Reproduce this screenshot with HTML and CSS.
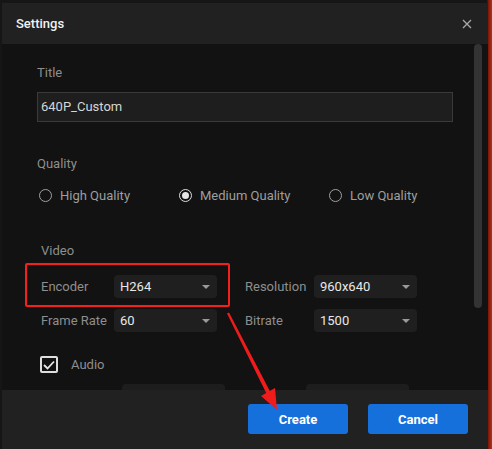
FILE: index.html
```html
<!DOCTYPE html>
<html>
<head>
<meta charset="utf-8">
<link rel="stylesheet" href="styles.css">
</head>
<body>
<div class="page">
  <div class="dialog">
    <div class="header">
      <span class="title">Settings</span>
      <svg class="close" width="10" height="10" viewBox="0 0 10 10"><path d="M1 1L9 9M9 1L1 9" stroke="#a8a8a8" stroke-width="1.3"/></svg>
    </div>
    <div class="content">
      <div class="label">Title</div>
      <div class="input">640P_Custom</div>

      <div class="label quality-label">Quality</div>
      <div class="radios">
        <div class="radio-item"><span class="radio"></span><span>High Quality</span></div>
        <div class="radio-item"><span class="radio checked"></span><span>Medium Quality</span></div>
        <div class="radio-item"><span class="radio"></span><span>Low Quality</span></div>
      </div>

      <div class="video">
        <div class="label video-label">Video</div>
        <div class="fields">
          <span class="flabel">Encoder</span>
          <div class="select">H264<span class="caret"></span></div>
          <span class="flabel">Resolution</span>
          <div class="select">960x640<span class="caret"></span></div>
          <span class="flabel">Frame Rate</span>
          <div class="select">60<span class="caret"></span></div>
          <span class="flabel">Bitrate</span>
          <div class="select">1500<span class="caret"></span></div>
        </div>
        <div class="audio">
          <span class="checkbox"><svg width="12" height="10" viewBox="0 0 12 10"><path d="M1 5L4.5 8.5L11 1.5" fill="none" stroke="#e8e8e8" stroke-width="1.8"/></svg></span>
          <span>Audio</span>
        </div>
        <div class="ghosts">
          <span class="ghost"></span>
          <span class="ghost"></span>
        </div>
      </div>

      <div class="scrollbar"></div>
      <div class="highlight"></div>
    </div>
    <div class="footer">
      <button class="btn">Create</button>
      <button class="btn">Cancel</button>
    </div>
  </div>
  <svg class="arrow" width="80" height="120" viewBox="0 0 80 120">
    <path d="M17 13.5 L19 12.5 L59.8 91.1 L65 88 L67 110 L51 96 L56.2 92.9 Z" fill="#f01c1c"/>
  </svg>
</div>
</body>
</html>
```

FILE: styles.css
```css
* { box-sizing: border-box; }
html, body {
  margin: 0;
  padding: 0;
  width: 492px;
  height: 449px;
  overflow: hidden;
}
body {
  background: linear-gradient(to right, #161616 0, #161616 487px, #7a1408 488px, #b0361a 492px);
  font-family: Roboto, "Noto Sans", sans-serif;
}
.page {
  position: relative;
  padding: 3px 4px 0 2px;
}
.dialog {
  width: 486px;
  height: 446px;
  display: flex;
  flex-direction: column;
  background: #121212;
}
.header {
  height: 41px;
  flex: none;
  background: #212121;
  display: flex;
  align-items: center;
  justify-content: space-between;
  padding: 0 16px 0 14px;
}
.title {
  color: #f2f2f2;
  font-size: 13px;
  font-weight: 500;
}
.content {
  flex: 1;
  position: relative;
  padding: 21px 0 0 35px;
  overflow: hidden;
}
.label {
  color: #8e8e8e;
  font-size: 13px;
  line-height: 16px;
}
.input {
  margin-top: 11px;
  width: 416px;
  height: 30px;
  background: #1e1e1e;
  border: 1px solid #3a3a3a;
  color: #d6d6d6;
  font-size: 13px;
  line-height: 28px;
  padding-left: 3px;
}
.quality-label { margin-top: 34px; }
.radios {
  display: flex;
  margin-top: 16px;
  height: 14px;
  align-items: center;
}
.radio-item {
  display: flex;
  align-items: center;
  gap: 8px;
  color: #9e9e9e;
  font-size: 13px;
}
.radio-item:nth-child(1) { width: 142px; padding-left: 2px; }
.radio-item:nth-child(2) { width: 150px; }
.radio {
  width: 13px;
  height: 13px;
  border-radius: 50%;
  border: 1.5px solid #a0a0a0;
  display: flex;
  align-items: center;
  justify-content: center;
}
.radio.checked { border-color: #dcdcdc; }
.radio.checked::after {
  content: "";
  width: 7px;
  height: 7px;
  border-radius: 50%;
  background: #e6e6e6;
}
.video { padding-left: 4px; }
.video-label { margin-top: 41px; }
.fields {
  margin-top: 16px;
  display: grid;
  grid-template-columns: 73px 103px 97px 103px;
  row-gap: 11px;
  align-items: center;
}
.fields .flabel:nth-child(3), .fields .flabel:nth-child(7) { margin-left: 28px; }
.flabel {
  color: #8e8e8e;
  font-size: 13px;
}
.select {
  position: relative;
  height: 23px;
  background: #1f1f1f;
  border-radius: 4px;
  color: #e8e8e8;
  font-size: 13px;
  line-height: 23px;
  padding-left: 6px;
}
.caret {
  position: absolute;
  right: 7px;
  top: 10px;
  width: 0;
  height: 0;
  border-left: 4px solid transparent;
  border-right: 4px solid transparent;
  border-top: 4px solid #9a9a9a;
}
.audio {
  margin-top: 24px;
  margin-left: -1px;
  display: flex;
  align-items: center;
  gap: 13px;
  color: #8e8e8e;
  font-size: 13px;
}
.checkbox {
  width: 18px;
  height: 17px;
  border: 2px solid #dedede;
  border-radius: 2px;
  display: flex;
  align-items: center;
  justify-content: center;
}
.ghosts {
  margin-top: 11px;
  display: flex;
  gap: 81px;
  padding-left: 81px;
}
.ghost {
  width: 103px;
  height: 10px;
  background: #1d1d1d;
  border-radius: 4px 4px 0 0;
}
.scrollbar {
  position: absolute;
  right: 6px;
  top: 0;
  width: 8px;
  height: 264px;
  background: #333;
  border-radius: 4px;
}
.highlight {
  position: absolute;
  left: 23px;
  top: 219px;
  width: 205px;
  height: 44px;
  border: 2px solid #f5201c;
  border-radius: 2px;
}
.arrow {
  position: absolute;
  left: 210px;
  top: 300px;
  z-index: 2;
}
.footer {
  height: 59px;
  flex: none;
  background: #212121;
  display: flex;
  justify-content: flex-end;
  gap: 20px;
  padding: 14px 20px 0 0;
}
.btn {
  width: 100px;
  height: 30px;
  border: none;
  border-radius: 3px;
  background: #1570dc;
  color: #ffffff;
  font-family: Roboto, "Noto Sans", sans-serif;
  font-size: 13px;
  font-weight: 700;
  padding: 0;
}
```
